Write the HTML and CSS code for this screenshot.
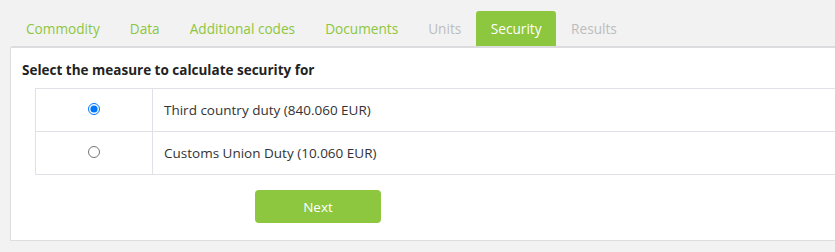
FILE: index.html
```html
<!DOCTYPE html>
<html lang="en">
<head>
    <meta charset="UTF-8">
    <meta name="viewport" content="width=device-width, initial-scale=1.0">
    <title>Security</title>
    <link rel="stylesheet" href="styles.css">
</head>
<body>
    <div class="page">
        <nav class="tabs">
            <a class="tab" href="#">Commodity</a>
            <a class="tab" href="#">Data</a>
            <a class="tab" href="#">Additional codes</a>
            <a class="tab" href="#">Documents</a>
            <a class="tab off" href="#">Units</a>
            <a class="tab active" href="#">Security</a>
            <a class="tab off" href="#">Results</a>
        </nav>
        <div class="panel">
            <h2>Select the measure to calculate security for</h2>
            <table class="measures">
                <tbody>
                    <tr>
                        <td class="pick"><input type="radio" name="measure" checked></td>
                        <td>Third country duty (840.060 EUR)</td>
                    </tr>
                    <tr>
                        <td class="pick"><input type="radio" name="measure"></td>
                        <td>Customs Union Duty (10.060 EUR)</td>
                    </tr>
                </tbody>
            </table>
            <div class="actions">
                <button class="next">Next</button>
            </div>
        </div>
    </div>
</body>
</html>
```

FILE: styles.css
```css
*{margin:0;box-sizing:border-box}
body{
    background-color: #f2f2f2;
    font-family: "Open Sans", "Liberation Sans", sans-serif;
    overflow: hidden;
}
.page{
    width: 1100px;
    padding: 11px 0 0 10px;
}
.tabs{
    display: flex;
    padding-left: 1px;
}
.tab{
    display: block;
    height: 35px;
    line-height: 35px;
    padding: 0 15px;
    font-size: 13.65px;
    color: #8dc63f;
    text-decoration: none;
    border-radius: 3px 3px 0 0;
}
.tab.off{
    color: #bdbdbd;
}
.tab.active{
    background-color: #8dc63f;
    color: white;
    padding: 0 14.5px;
}
.panel{
    background-color: white;
    border: 1px solid #dedede;
    border-top: 2px solid #dcdcdf;
    border-radius: 3px 0 0 0;
    padding: 12px 0 17px 11px;
}
.panel h2{
    font-size: 13.5px;
    font-weight: bold;
    color: #222;
    line-height: 20px;
}
.measures{
    border-collapse: collapse;
    margin: 8px 0 0 13px;
    width: 900px;
}
.measures td{
    border: 1px solid #dfe1e6;
    height: 43px;
    padding: 0 11px;
    font-size: 13.5px;
    color: #333;
}
.measures td.pick{
    width: 117px;
    text-align: center;
}
.measures input{
    display: block;
    margin: -2px auto 0;
    width: 12px;
    height: 12px;
}
.actions{
    padding: 15px 0 0 233px;
}
.next{
    width: 126px;
    height: 33px;
    border: none;
    border-radius: 4px;
    background-color: #8dc63f;
    color: white;
    font-family: "Open Sans", "Liberation Sans", sans-serif;
    font-size: 13.5px;
    cursor: pointer;
}
```
